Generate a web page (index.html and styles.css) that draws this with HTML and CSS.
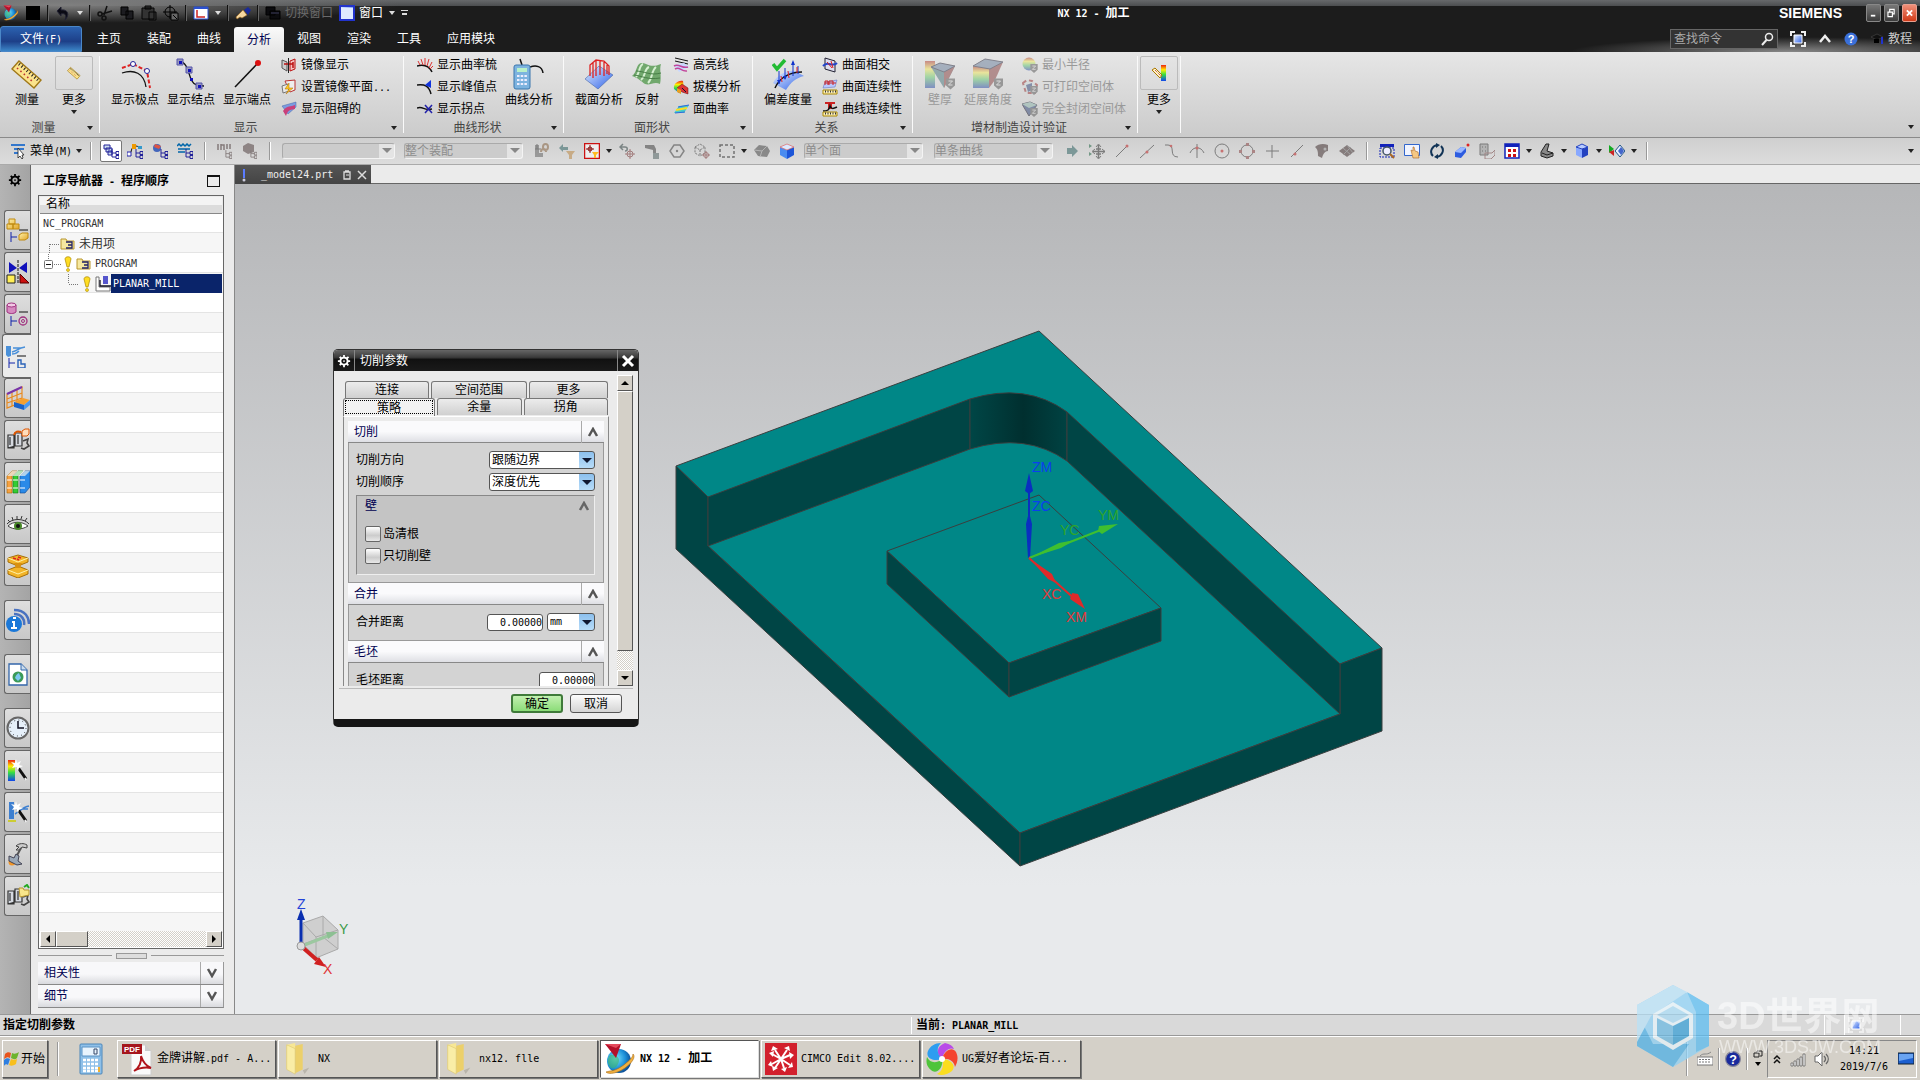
FILE: index.html
```
<!DOCTYPE html>
<html lang="zh-CN">
<head>
    <meta charset="UTF-8">
    <meta name="viewport" content="width=device-width, initial-scale=1.0">
    <title>NX 12 - 加工</title>
    <link rel="stylesheet" href="styles.css">
</head>
<body>
    <!-- Shared icons -->
    <svg class="sprite" aria-hidden="true">
        <defs>
            <linearGradient id="rainbow" x1="0" y1="0" x2="0" y2="1"><stop offset="0" stop-color="#e21"/><stop offset=".3" stop-color="#fe0"/><stop offset=".6" stop-color="#3d4"/><stop offset="1" stop-color="#14e"/></linearGradient>
            <linearGradient id="blueFace" x1="0" y1="0" x2="1" y2="1"><stop offset="0" stop-color="#e4efff"/><stop offset="1" stop-color="#2f62e8"/></linearGradient>
            <linearGradient id="goldFace" x1="0" y1="0" x2="1" y2="1"><stop offset="0" stop-color="#fff2a8"/><stop offset="1" stop-color="#e0a52a"/></linearGradient>
            <radialGradient id="globe" cx=".35" cy=".4" r=".7"><stop offset="0" stop-color="#7fe6ff"/><stop offset=".6" stop-color="#1b8fd8"/><stop offset="1" stop-color="#0a3f86"/></radialGradient>
        </defs>
        <symbol id="nx" viewBox="0 0 32 32"><circle cx="15" cy="18" r="12" fill="url(#globe)"/><path d="M11 12c4 2 5 5 3 9s-4 5-7 4c-4-4-4-9-1-13z" fill="#3db56a" opacity=".6"/><path d="M29 11c3 3-1 9-8 14S5 32 2 29l4-1c4 0 10-3 15-7s8-7 8-10z" fill="#f0b040" stroke="#a96a10" stroke-width=".6"/><path d="M1 1h16l-5 14z" fill="#b3102a"/><path d="M1 1h16l-5 4z" fill="#e44a5c"/></symbol>
        <symbol id="ruler" viewBox="0 0 32 32"><path d="M8 3l22 19-7 8L1 11z" fill="#fbe38c" stroke="#a07818" stroke-width="1.4"/><path d="M8 6l19 16" stroke="#222" stroke-width="3" stroke-dasharray="1 2.4"/><path d="M6 10l15 13" stroke="#b33" stroke-width="1.6" stroke-dasharray="1.5 3"/></symbol>
        <symbol id="gear" viewBox="0 0 16 16"><path d="M7 1h2v2l2 .8 1.500-1.300 1.400 1.400L12.400 5.400 13.200 7H15v2h-1.800l-.8 1.800 1.300 1.400-1.400 1.400-1.400-1.300L9 13v2H7v-2l-1.800-.8-1.400 1.300-1.400-1.400 1.200-1.400L2.800 9H1V7h1.800l.8-1.600-1.200-1.500 1.400-1.400L5.200 3.800 7 3zM8 5a3 3 0 100 6 3 3 0 000-6z" fill="currentColor" fill-rule="evenodd"/><circle cx="8" cy="8" r="1" fill="currentColor"/></symbol>
        <symbol id="up" viewBox="0 0 12 10"><path d="M2 9l4-7 4 7" fill="none" stroke="currentColor" stroke-width="2.500"/></symbol>
        <symbol id="down" viewBox="0 0 12 10"><path d="M2 1l4 7 4-7" fill="none" stroke="currentColor" stroke-width="2.500"/></symbol>
        <symbol id="folder" viewBox="0 0 15 13"><path d="M1 2h5l1 2h7v8H1z" fill="#f6e8a0" stroke="#b8962e"/><path d="M6 5h6v6H6M8 8h4" fill="none" stroke="#226" stroke-width="1.300"/></symbol>
        <symbol id="bang" viewBox="0 0 8 16"><path d="M1 3c0-3 6-3 6 0L5 11H3z" fill="#fd2" stroke="#a80" stroke-width=".7"/><circle cx="4" cy="14" r="1.500" fill="#fd2" stroke="#a80" stroke-width=".6"/></symbol>
        <symbol id="shield" viewBox="0 0 9 11"><path d="M0 0h9v7L4.500 11 0 7z" fill="#555"/><path d="M2.500 2.500h4l-4 4h4" stroke="#ddd" fill="none"/></symbol>
        <symbol id="tree" viewBox="0 0 8 10"><path d="M1 0v8h4M1 4h4" stroke="currentColor" fill="none"/><path d="M5 2.500h3v3H5zM5 6.500h3v3H5z" fill="none" stroke="currentColor"/></symbol>
        <symbol id="fit" viewBox="0 0 16 16"><path d="M1 5V1h4M11 1h4v4M15 11v4h-4M5 15H1v-4" fill="none" stroke="#eee" stroke-width="2"/><path d="M4 4h8v8H4z" fill="url(#blueFace)" stroke="#fff"/></symbol>
        <symbol id="machine" viewBox="0 0 24 24"><path d="M2 7h6v13H2zM9 5h7v13H9zM4 9v8M12 7v9M2 20l7-2" fill="#d5d9e0" stroke="#333" stroke-width="1.200"/><path d="M17 13l5-2-1 4 2 3-5 3-3-1" fill="none" stroke="#444" stroke-width="1.600"/></symbol>
        <symbol id="wand" viewBox="0 0 24 24"><path d="M11 8l9 13" stroke="#111" stroke-width="3"/><path d="M19 20l1 2" stroke="#eee" stroke-width="2"/><path d="M10 1l1 4 4-2-2 4 4 1-4 2-1 3-2-4-4 1 2-3-3-3 4 1z" fill="#fff"/></symbol>
        <symbol id="folderbig" viewBox="0 0 30 36"><path d="M20 30l7-3-5 7z" fill="#b9b5ab"/><path d="M3 3l9-2v31l-9-4z" fill="#f7e795"/><path d="M12 4l8-2v27l-8 4z" fill="#ecd06a"/><path d="M3 3l9 4v27l-9-5z" fill="#f9eda6" stroke="#dcc46a" stroke-width=".6"/></symbol>
    </svg>

    <header class="titlebar">
        <div class="quick">
            <svg class="i16"><use href="#nx"/></svg>
            <svg class="i16" viewBox="0 0 16 16"><path d="M1 1h14v14H1z"/></svg>
            <i class="tick"></i>
            <button aria-label="撤消"><svg class="i16" viewBox="0 0 16 16"><path d="M2 6l4-4v3c7-1 9 5 4 10 2-5 0-7-4-6v2z" fill="#0a0a14" stroke="#223"/></svg></button><i class="arrow light"></i>
            <i class="tick"></i>
            <button aria-label="剪切"><svg class="i16" viewBox="0 0 16 16"><path d="M10 1L7 10M15 6L5 9" stroke="#111" stroke-width="1.500"/><circle cx="3" cy="9" r="2" fill="none" stroke="#111" stroke-width="1.500"/><circle cx="7" cy="13" r="2" fill="none" stroke="#111" stroke-width="1.500"/></svg></button>
            <button aria-label="复制"><svg class="i16" viewBox="0 0 16 16"><path d="M2 2h7v8H2zM7 6h7v8H7z" fill="#1c1c20" stroke="#000"/></svg></button>
            <button aria-label="粘贴"><svg class="i16" viewBox="0 0 16 16"><path d="M1 3h12v11H1zM4 1h6v3H4zM8 7h7v8H8z" fill="#333" stroke="#050505"/></svg></button>
            <button aria-label="重复"><svg class="i16" viewBox="0 0 16 16"><circle cx="7" cy="7" r="5" fill="none" stroke="#000"/><path d="M7 0v14M0 7h14" stroke="#000"/><path d="M8 8h7v7H8z" fill="#666" stroke="#000"/><path d="M10 10l4 4" stroke="#000"/></svg></button>
            <i class="tick"></i>
            <button aria-label="坐标系"><svg class="i16" viewBox="0 0 16 16"><path d="M1 2h14v12H1z" fill="#fff" stroke="#2b50d0"/><path d="M1 2h14v2H1z" fill="#2b50d0"/><path d="M4 5v7h8" fill="none" stroke="#c22" stroke-width="1.500"/></svg></button><i class="arrow light"></i>
            <i class="tick"></i>
            <button aria-label="触控"><svg class="i16" viewBox="0 0 16 16"><path d="M9 5l4-3 3 3-3 5z" fill="#1a2a9a"/><path d="M1 12l7-7 4 5-5 3-2-1-3 2z" fill="#f6d7a0" stroke="#a06a20" stroke-width=".6"/></svg></button>
            <i class="tick"></i>
            <button class="dim"><svg class="i16" viewBox="0 0 16 16"><path d="M1 2h9v8H1zM5 6h10v8H5z" fill="#0b0b0e" stroke="#000"/><path d="M6 7h8v2H6z" fill="#223"/></svg>切换窗口</button>
            <button><svg class="i16" viewBox="0 0 16 16"><path d="M1 1h14v14H1z" fill="url(#blueFace)" stroke="#2233cc" stroke-width="2"/><path d="M2 3h12v11H2z" fill="#dfeaff"/></svg>窗口</button><i class="arrow light"></i><i class="arrow light bar"></i>
        </div>
        <h1><span class="lat">NX 12 - </span>加工</h1>
        <div class="brand">SIEMENS</div>
        <div class="winbtns">
            <button aria-label="最小化"><svg viewBox="0 0 14 18"><path d="M4 12h5" stroke="#fff" stroke-width="2"/></svg></button>
            <button aria-label="还原"><svg viewBox="0 0 14 18"><path d="M5 8V5h5v5H8M3 8h5v5H3z" fill="none" stroke="#fff" stroke-width="1.300"/></svg></button>
            <button class="close" aria-label="关闭"><svg viewBox="0 0 14 18"><path d="M4 6l6 6M10 6l-6 6" stroke="#fff" stroke-width="2"/></svg></button>
        </div>
    </header>

    <nav class="tabs">
        <button class="file">文件<span class="lat">(F)</span></button>
        <button>主页</button><button>装配</button><button>曲线</button><button class="active">分析</button><button>视图</button><button>渲染</button><button>工具</button><button>应用模块</button>
        <div class="tools">
            <div class="search">
                <input type="text" placeholder="查找命令" aria-label="查找命令">
                <svg viewBox="0 0 14 14"><circle cx="9" cy="5" r="3.500" fill="none" stroke="#eee" stroke-width="1.500"/><path d="M6.500 8L2 13" stroke="#eee" stroke-width="2"/></svg>
            </div>
            <button aria-label="全屏"><svg class="i16"><use href="#fit"/></svg></button>
            <button aria-label="最小化功能区"><svg class="i14" viewBox="0 0 14 14"><path d="M2 10l5-6 5 6" fill="none" stroke="#eee" stroke-width="2.500"/></svg></button>
            <button aria-label="帮助"><svg class="i14" viewBox="0 0 14 14"><circle cx="7" cy="7" r="6.500" fill="#3a6fd8"/><text x="7" y="11" text-anchor="middle" class="qmark">?</text></svg></button>
            <button class="course"><svg class="i14" viewBox="0 0 14 14"><path d="M1 5l6-3 6 3-6 3z" fill="#111" stroke="#555" stroke-width=".5"/><path d="M4 7v4h5V7" fill="#000"/><path d="M12 5v7" stroke="#23c" stroke-width="2"/></svg>教程</button>
        </div>
    </nav>

    <section class="ribbon">
        <div class="group g-measure">
            <div class="group-body">
                <button class="big"><svg class="i32"><use href="#ruler"/></svg>测量</button>
                <button class="big more"><span class="frame"><svg class="i14"><use href="#ruler"/></svg></span>更多<i class="arrow"></i></button>
            </div>
            <div class="group-name"><span>测量</span><i class="arrow"></i></div>
        </div>
        <div class="group g-show">
            <div class="group-body">
                <button class="big"><svg class="i32" viewBox="0 0 32 32"><path d="M3 10L14 6 28 13 31 30" fill="none" stroke="#d22" stroke-width="2" stroke-dasharray="4 2"/><path d="M3 15c12-4 22 0 24 14" fill="none" stroke="#111" stroke-width="1.300"/><circle cx="14" cy="6" r="2.500" fill="#fff" stroke="#229"/><circle cx="28" cy="13" r="2.500" fill="#fff" stroke="#229"/></svg>显示极点</button>
                <button class="big"><svg class="i32" viewBox="0 0 32 32"><path d="M4 3c10 2 9 14 13 20 2 4 6 5 12 5" fill="none" stroke="#111" stroke-width="1.300"/><path d="M2 1h6v6H2zM11 9h6v6h-6zM21 25h6v6h-6z" fill="#99b" stroke="#55a"/><path d="M4 3h3v3H4zM13 11h3v3h-3zM15 20h3v3h-3zM23 27h3v3h-3z" fill="#11b"/></svg>显示结点</button>
                <button class="big"><svg class="i32" viewBox="0 0 32 32"><path d="M4 29L27 5" stroke="#111" stroke-width="1.500"/><circle cx="27" cy="5" r="3" fill="#d11"/></svg>显示端点</button>
                <div class="stack">
                    <button><svg class="i16" viewBox="0 0 16 16"><path d="M1 3l5 2v9l-5-3z" fill="#ccc" stroke="#555"/><path d="M9 4l5-2v10l-5 2z" fill="#f4c0c0" stroke="#b11"/><path d="M3 7h9M12 5v6" stroke="#b11" stroke-width="1.500"/><path d="M7.500 1v15" stroke="#222"/></svg>镜像显示</button>
                    <button><svg class="i16" viewBox="0 0 16 16"><path d="M4 2l10-1v10l-5 2z" fill="#eee" stroke="#b33"/><path d="M1 7l6-2 1 7-6 2z" fill="#e9e9e9" stroke="#777"/><path d="M8 4l-4 6h4l-3 5 7-6H8z" fill="#fc2" stroke="#a60" stroke-width=".5"/></svg><span>设置镜像平面<span class="lat">...</span></span></button>
                    <button><svg class="i16" viewBox="0 0 16 16"><path d="M1 5l14-4v5L7 13z" fill="#7c9be0" stroke="#46a" stroke-width=".5"/><path d="M2 10c4-6 8-4 12-6v4c-4 1-7 0-9 7z" fill="#c9407a"/></svg>显示阻碍的</button>
                </div>
            </div>
            <div class="group-name"><span>显示</span><i class="arrow"></i></div>
        </div>
        <div class="group g-curve">
            <div class="group-body">
                <div class="stack">
                    <button><svg class="i16" viewBox="0 0 16 16"><path d="M0 9c7-2 12 0 15 6" fill="none" stroke="#111" stroke-width="1.500"/><path d="M3 8L1 4M6 8L4 2M8 8L8 1M10 9l2-7M12 11l3-6M13 12l3-3" stroke="#d33"/></svg>显示曲率梳</button>
                    <button><svg class="i16" viewBox="0 0 16 16"><path d="M0 6c8-1 12 1 14 9" fill="none" stroke="#111" stroke-width="1.500"/><path d="M14 1v8L8 6z" fill="#13d"/></svg>显示峰值点</button>
                    <button><svg class="i16" viewBox="0 0 16 16"><path d="M0 7c7-2 6 3 15 1" fill="none" stroke="#111" stroke-width="1.500"/><path d="M8 4l7 8M15 4l-7 8" stroke="#22a" stroke-width="1.500"/></svg>显示拐点</button>
                </div>
                <button class="big"><svg class="i32" viewBox="0 0 32 32"><path d="M7 1l2 6M17 9c6-2 12-1 13 6" fill="none" stroke="#111" stroke-width="1.500"/><rect x="1" y="7" width="16" height="24" rx="2" fill="#7db3df" stroke="#3a77ad"/><path d="M4 10h10v4H4z" fill="#b8f0c8"/><path d="M4 18h10M4 22h10M4 26h10" stroke="#eef" stroke-width="2" stroke-dasharray="2.500 1.200"/></svg>曲线分析</button>
            </div>
            <div class="group-name"><span>曲线形状</span><i class="arrow"></i></div>
        </div>
        <div class="group g-face">
            <div class="group-body">
                <button class="big"><svg class="i32" viewBox="0 0 32 32"><path d="M2 21L16 8l14 9-15 14z" fill="url(#blueFace)" stroke="#46a" stroke-width=".6"/><path d="M7 18V7l6-5 8 1 5 5v9M10 20V5M13 18V3M17 17V3M21 18V4M24 16V7" fill="none" stroke="#d22" stroke-width="1.300"/></svg>截面分析</button>
                <button class="big"><svg class="i32" viewBox="0 0 32 32"><path d="M1 18C6 15 5 6 10 5c6-1 8 6 20 1-2 6 1 12-1 20-6-3-10 2-15 0-4-3-7-6-13-8z" fill="#71a86d"/><path d="M5 19C9 15 8 7 12 6M10 22c5-4 3-11 8-13M17 25c5-5 3-12 8-16" stroke="#d7f0d2" fill="none" stroke-width="2"/><path d="M5 13c8 0 14 5 25 2M3 17c8 1 14 5 26 3" stroke="#477e46" fill="none"/></svg>反射</button>
                <div class="stack">
                    <button><svg class="i16" viewBox="0 0 16 16"><path d="M2 1l13 3M2 4l13 3" stroke="#111"/><path d="M1 8l10-2 5 4-10 5z" fill="#c9d8ff"/><path d="M1 9c5-3 8 3 14 1M2 12c5-3 6 3 12 2" stroke="#c2469a" fill="none" stroke-width="1.500"/></svg>高亮线</button>
                    <button><svg class="i16" viewBox="0 0 16 16"><path d="M1 10C0 5 5 1 10 2l1 8-5 4z" fill="url(#rainbow)"/><path d="M4 9l5-4 6 4v6l-6-2z" fill="#d33" stroke="#611" stroke-width=".5"/><path d="M4 9l4 2v4l-4-2z" fill="#e9a020"/><path d="M9 9l4 4" stroke="#113"/></svg>拔模分析</button>
                    <button><svg class="i16" viewBox="0 0 16 16"><path d="M1 12L6 5l10-1-5 8z" fill="#4cc"/><path d="M3 9l11-2" stroke="#fd2" stroke-width="2"/><path d="M5 6l11-2M2 12l10-1" stroke="#36d"/></svg>面曲率</button>
                </div>
            </div>
            <div class="group-name"><span>面形状</span><i class="arrow"></i></div>
        </div>
        <div class="group g-rel">
            <div class="group-body">
                <button class="big"><svg class="i32" viewBox="0 0 32 32"><path d="M1 25c5-9 14-13 22-12l9 5c-8 2-13 6-18 14z" fill="url(#blueFace)"/><path d="M3 30c4-9 13-16 27-16" stroke="#111" stroke-width="1.500" fill="none"/><path d="M7 13v13M13 10v11M21 18V4M26 16V8" stroke="#13c"/><path d="M5 22h4l-2 4zM11 18h4l-2 4zM19 7h4l-2-5z" fill="#13c"/><path d="M9 18l1 6M16 13l1 7M25 9v6" stroke="#d22"/><path d="M1 6l4 5 8-9" fill="none" stroke="#2b3" stroke-width="3.500"/></svg>偏差度量</button>
                <div class="stack">
                    <button><svg class="i16" viewBox="0 0 16 16"><path d="M3 1l10 3v11L3 12z" fill="#dde" stroke="#223"/><path d="M1 9c5-6 9 2 14-3" stroke="#24c" stroke-width="2" fill="none"/><path d="M5 5l5 6M9 4l2 7" stroke="#d22"/></svg>曲面相交</button>
                    <button><svg class="i16" viewBox="0 0 16 16"><path d="M3 3l12-2-2 7-12 1z" fill="#b9c9ff" stroke="#56b" stroke-width=".5"/><path d="M3 6V2h3v4M7 6V2h4v4M3 4h11" stroke="#c22" fill="none"/><path d="M1 11h14v4H1z" fill="#fdf0b8" stroke="#a80"/><path d="M3 12.500h11" stroke="#333" stroke-width="2" stroke-dasharray="1 1.500"/></svg>曲面连续性</button>
                    <button><svg class="i16" viewBox="0 0 16 16"><path d="M3 1h10v2h-3v5H6V3H3z" fill="#c22"/><path d="M1 10c5 0 6-1 7-5 1 3 3 3 7 1" stroke="#111" fill="none" stroke-width="1.500"/><path d="M1 11h14v4H1z" fill="#fdf0b8" stroke="#a80"/><path d="M3 12.500h11" stroke="#333" stroke-width="2" stroke-dasharray="1 1.500"/></svg>曲线连续性</button>
                </div>
            </div>
            <div class="group-name"><span>关系</span><i class="arrow"></i></div>
        </div>
        <div class="group g-print">
            <div class="group-body">
                <button class="big" disabled><svg class="i32" viewBox="0 0 32 32"><path d="M1 3h10v27H1z" fill="url(#rainbow)"/><path d="M7 9l9-4 15 3-11 22z" fill="#2d7a84"/><path d="M20 14l11-6-11 22z" fill="#a33"/><path d="M7 9l9-4 15 3-11 6z" fill="#5d7fb0" stroke="#224"/><use href="#shield" x="22" y="20" width="9" height="12"/></svg>壁厚</button>
                <button class="big" disabled><svg class="i32" viewBox="0 0 32 32"><path d="M1 8v22h16V10z" fill="url(#rainbow)"/><path d="M17 10l14-6-8 18-6 8z" fill="#a33"/><path d="M1 8l12-7 18 3-13 7z" fill="#5d7fb0" stroke="#224"/><use href="#shield" x="22" y="20" width="9" height="12"/></svg>延展角度</button>
                <div class="stack">
                    <button disabled><svg class="i16" viewBox="0 0 16 16"><circle cx="7" cy="7" r="6.500" fill="url(#rainbow)"/><use href="#shield" x="8" y="7" width="8" height="9"/></svg>最小半径</button>
                    <button disabled><svg class="i16" viewBox="0 0 16 16"><path d="M1 4l4-3 5 1 5 4-2 8H4z" fill="#cdd" stroke="#c22" stroke-width="2" stroke-dasharray="4 3"/><path d="M4 6l6-2v7l-4 2z" fill="#249"/><use href="#shield" x="8" y="7" width="8" height="9"/></svg>可打印空间体</button>
                    <button disabled><svg class="i16" viewBox="0 0 16 16"><path d="M0 3l8-2 7 3-8 11z" fill="#249" stroke="#113"/><path d="M0 3l8-2 7 3-8 3z" fill="#7ba"/><use href="#shield" x="8" y="7" width="8" height="9"/></svg>完全封闭空间体</button>
                </div>
            </div>
            <div class="group-name"><span>增材制造设计验证</span><i class="arrow"></i></div>
        </div>
        <div class="group g-more">
            <div class="group-body">
                <button class="big more"><span class="frame"><svg class="i16" viewBox="0 0 16 16"><path d="M10 0h5v16h-5z" fill="url(#rainbow)"/><path d="M4 3l7 7-2 3-8-8z" fill="#fff3c8" stroke="#a70"/><path d="M4 5l6 6" stroke="#a22" stroke-dasharray="1 1"/></svg></span>更多<i class="arrow"></i></button>
            </div>
        </div>
        <i class="arrow corner"></i>
    </section>

    <section class="selbar">
        <button class="menu"><svg class="i16" viewBox="0 0 16 16"><path d="M1 2h14M4 6h10M4 10h8" stroke="#37c" stroke-width="2"/><path d="M8 5v10l2-2 2 3 1-1-1-3h2z" fill="#fff" stroke="#222" stroke-width=".8"/></svg><span>菜单<span class="lat">(M)</span></span><i class="arrow"></i></button>
        <i class="tick near"></i>
        <button class="pressed"><svg class="i16" viewBox="0 0 16 16"><path d="M1 2h6v4H1zM3 5h6v4H3zM5 8h4v4H5z" fill="#cde" stroke="#229"/><use href="#tree" x="8" y="6" width="8" height="10" color="#229"/></svg></button>
        <button><svg class="i16" viewBox="0 0 16 16"><path d="M4 9c1-6 4-7 8-5" fill="none" stroke="#111"/><path d="M5 1h4v5H5z" fill="#e90"/><path d="M0 9h4v4H0z" fill="#fff" stroke="#22a"/><path d="M11 3h4v3h-4z" fill="#39c"/><use href="#tree" x="8" y="6" width="8" height="10" color="#229"/></svg></button>
        <button><svg class="i16" viewBox="0 0 16 16"><circle cx="5" cy="5" r="4" fill="#46b"/><path d="M3 1l6 2-2 3-5-2z" fill="#d54"/><use href="#tree" x="8" y="6" width="8" height="10" color="#229"/></svg></button>
        <button><svg class="i16" viewBox="0 0 16 16"><path d="M0 3l2-2 2 2 2-2 2 2 2-2 2 2 2-2M1 6h12M1 9h7" fill="none" stroke="#06a" stroke-width="1.500"/><use href="#tree" x="8" y="6" width="8" height="10" color="#229"/></svg></button>
        <i class="tick"></i>
        <button disabled><svg class="i16" viewBox="0 0 16 16"><path d="M1 1v6M4 1v6M4 2h3v5M10 1v5M13 1v5" stroke="#433" stroke-width="1.500" fill="none"/><use href="#tree" x="8" y="7" width="7" height="9" color="#433"/></svg></button>
        <button disabled><svg class="i16" viewBox="0 0 16 16"><path d="M1 3l5-3 6 2v7l-6 2-5-3z" fill="#544"/><use href="#tree" x="8" y="7" width="7" height="9" color="#433"/></svg></button>
        <i class="tick"></i>
        <span class="combo off w113"><select disabled aria-label="类型过滤器"><option></option></select></span>
        <span class="combo off w119"><select disabled aria-label="选择范围"><option>整个装配</option></select></span>
        <button disabled><svg class="i16" viewBox="0 0 16 16"><path d="M1 2v12h8v-4H5V2z" fill="#666"/><path d="M1 6h6M3 1v5" stroke="#333" fill="none"/><path d="M9 4c0-4 5-4 5 0s-5 4-5 0zM7 9c0-4 5-4 5 0" fill="none" stroke="#864" stroke-width="2"/></svg></button>
        <button disabled><svg class="i16" viewBox="0 0 16 16"><path d="M0 5l4-4v3h5v3H4v2z" fill="#366"/><path d="M7 8h9l-3 4v4h-3v-4z" fill="#b84"/></svg></button>
        <button><svg class="i16" viewBox="0 0 16 16"><path d="M.5.500h15v15H.5z" fill="#eee" stroke="#c11" stroke-width="1.500"/><path d="M6 2v8M2 6h8" stroke="#811"/><circle cx="6" cy="6" r="2" fill="none" stroke="#811"/><path d="M8 9h7l-3 3v3h-2v-3z" fill="#fb2"/></svg></button><i class="arrow"></i>
        <button disabled><svg class="i16" viewBox="0 0 16 16"><path d="M1 4h5c3 0 3 4 0 4M4 1L1 4l3 3" stroke="#344" stroke-width="1.500" fill="none"/><circle cx="11" cy="11" r="3" fill="none" stroke="#733"/><path d="M11 6v10M6 11h10" stroke="#733"/></svg></button>
        <button disabled><svg class="i16" viewBox="0 0 16 16"><path d="M1 2h9l2 4v4H9V7L1 5z" fill="#444"/><path d="M9 10h6v6H9z" fill="#566"/></svg></button>
        <button disabled><svg class="i16" viewBox="0 0 16 16"><path d="M5 2h6l4 6-4 6H5L1 8z" fill="none" stroke="#444" stroke-width="1.500"/><circle cx="8" cy="8" r="1.200" fill="#444"/></svg></button>
        <button disabled><svg class="i16" viewBox="0 0 16 16"><path d="M1 4l5-3 5 3v6l-5 3-5-3zM1 4l5 3 5-3M6 7v6" fill="none" stroke="#333" stroke-dasharray="2 1"/><circle cx="12" cy="12" r="2.500" fill="none" stroke="#733"/><path d="M12 8v8M8 12h8" stroke="#733"/></svg></button>
        <button disabled><svg class="i16" viewBox="0 0 16 16"><path d="M1 2h14v12H1z" fill="none" stroke="#222" stroke-width="1.500" stroke-dasharray="3 2"/></svg></button><i class="arrow"></i>
        <button disabled><svg class="i16" viewBox="0 0 16 16"><path d="M0 7l5-5 8 1 3 5-3 6-9-1z" fill="#4a4a4a"/><path d="M0 7l8 1 5-5M8 8l-2 6" stroke="#999" fill="none"/></svg></button>
        <button><svg class="i16" viewBox="0 0 16 16"><path d="M1 4l7 3v9l-7-4z" fill="#4a8cf0"/><path d="M8 7l7-3v8l-7 4z" fill="#1c55d8"/><path d="M1 4l7-3 7 3-7 3z" fill="#dce9ff" stroke="#d66" stroke-width=".7"/></svg></button>
        <span class="combo off w119"><select disabled aria-label="面规则"><option>单个面</option></select></span>
        <span class="combo off w119"><select disabled aria-label="曲线规则"><option>单条曲线</option></select></span>
        <button disabled><svg class="i16" viewBox="0 0 16 16"><path d="M3 5h5V2l6 6-6 6v-3H3z" fill="#366"/></svg></button>
        <button disabled><svg class="i16" viewBox="0 0 16 16"><path d="M0 1l3 2-3 2zM0 9l3 2-3 2z" fill="#264"/><path d="M9.500 2v13M4 8.500h12M7 6h5M7 11h5" stroke="#333" stroke-width="1.500"/><path d="M7 4l2.500-3L12 4M7 13l2.500 3 2.500-3M6 6L3 8.500 6 11M13 6l3 2.500-3 2.500" fill="none" stroke="#333"/></svg></button>
        <button disabled><svg class="i16" viewBox="0 0 16 16"><path d="M2 14L13 3" stroke="#333"/><circle cx="13" cy="3" r="1.500" fill="#b22"/></svg></button>
        <button disabled><svg class="i16" viewBox="0 0 16 16"><path d="M1 15L15 2" stroke="#333"/><circle cx="8" cy="9" r="1.500" fill="#b22"/></svg></button>
        <button disabled><svg class="i16" viewBox="0 0 16 16"><path d="M1 2h3c8 0 0 12 10 12" fill="none" stroke="#333"/><circle cx="7" cy="3" r="1.300" fill="#b22"/></svg></button>
        <button disabled><svg class="i16" viewBox="0 0 16 16"><path d="M8 1v14M1 10c3-7 11-7 14 0" fill="none" stroke="#333"/><circle cx="8" cy="5" r="1.500" fill="#b22"/></svg></button>
        <button disabled><svg class="i16" viewBox="0 0 16 16"><circle cx="8" cy="8" r="7" fill="none" stroke="#333"/><circle cx="8" cy="8" r="1.500" fill="#b22"/></svg></button>
        <button disabled><svg class="i16" viewBox="0 0 16 16"><circle cx="8" cy="8" r="6" fill="none" stroke="#333"/><path d="M7 0h3v3H7zM7 13h3v3H7zM0 7h3v3H0zM13 7h3v3h-3z" fill="#844"/></svg></button>
        <button disabled><svg class="i16" viewBox="0 0 16 16"><path d="M8 2v13M2 8h13" stroke="#333"/></svg></button>
        <button disabled><svg class="i16" viewBox="0 0 16 16"><path d="M2 14L14 2" stroke="#333"/><circle cx="6" cy="11" r="1.500" fill="#b22"/></svg></button>
        <button disabled><svg class="i16" viewBox="0 0 16 16"><path d="M1 4c3-3 8-4 13-2v6c-3 0-5 3-6 7l-4-2c0-4 0-6-3-9z" fill="#433"/><circle cx="11" cy="6" r="1.500" fill="#999"/></svg></button>
        <button disabled><svg class="i16" viewBox="0 0 16 16"><path d="M0 8l8-6 8 6-8 6z" fill="#433"/><path d="M4 5l8 7M8 2l6 8M12 4L4 12" stroke="#777"/></svg></button>
        <i class="tick"></i>
        <button><svg class="i16" viewBox="0 0 16 16"><path d="M1 1h14v3H1z" fill="#12b"/><path d="M1 5h14v9H1z" fill="none" stroke="#12b" stroke-dasharray="2 1"/><circle cx="8" cy="8" r="4" fill="#eef" stroke="#456" stroke-width="1.500"/><path d="M11 11l4 4" stroke="#a62" stroke-width="2"/></svg></button>
        <button><svg class="i16" viewBox="0 0 16 16"><path d="M.500 1.500h15v11H.500z" fill="#f0f4ff" stroke="#36c"/><path d="M7 7l2 1V4h1l1 4 3 1 1 6H9z" fill="#f5c884" stroke="#a62" stroke-width=".6"/></svg></button>
        <button><svg class="i16" viewBox="0 0 16 16"><path d="M4 13C0 9 3 3 8 2M12 3c4 4 1 10-4 11" fill="none" stroke="#135" stroke-width="2"/><path d="M7 0l4 2-4 3zM9 11l-4 3 4 2z" fill="#135"/></svg></button>
        <button><svg class="i16" viewBox="0 0 16 16"><path d="M1 9l6-5 5 1v4l-5 6-6-1z" fill="#2d5ce0"/><path d="M1 9l6-5 5 1-5 5z" fill="#9ab8ff"/><circle cx="14" cy="2" r="1.500" fill="#d22"/></svg></button>
        <button disabled><svg class="i16" viewBox="0 0 16 16"><path d="M1 1h8v11H1z" fill="#999" stroke="#333"/><path d="M3 4h1M6 4h1M3 8h1M6 8h1" stroke="#222"/><path d="M6 10h7l3-3v5l-4 4H6z" fill="none" stroke="#744"/></svg></button>
        <button><svg class="i16" viewBox="0 0 16 16"><path d="M1 1h14v14H1z" fill="#fff" stroke="#12b" stroke-width="1.500"/><path d="M1 1h14v3H1z" fill="#12b"/><path d="M4 6h3v3H4zM9 6h3v3H9zM4 11h3v3H4zM9 11h3v3H9z" fill="#c11"/></svg></button><i class="arrow"></i>
        <button><svg class="i16" viewBox="0 0 16 16"><path d="M2 9l5-8h3L8 8l6 2v3l-6 2-6-2z" fill="#888" stroke="#222"/><path d="M3 10l5 2 6-2" fill="none" stroke="#222"/></svg></button><i class="arrow"></i>
        <button><svg class="i16" viewBox="0 0 16 16"><path d="M2 4l6 2v9l-6-3z" fill="#88a8ff"/><path d="M8 6l6-2v8l-6 3z" fill="#2342c0"/><path d="M2 4l6-3 6 3-6 2z" fill="#b9ccff" stroke="#2342c0"/></svg></button><i class="arrow"></i>
        <button><svg class="i16" viewBox="0 0 16 16"><path d="M0 2l5 4-5 4z" fill="#1a2"/><path d="M0 9l5-2v6z" fill="#c22"/><path d="M6 8l5-6 5 6-5 6z" fill="#e8eeff" stroke="#258"/><path d="M9 8l3-4 3 4-3 4z" fill="#46c"/></svg></button><i class="arrow"></i>
        <i class="tick"></i>
        <i class="arrow corner"></i>
    </section>

    <main class="workspace">
        <aside class="resource">
            <svg class="i14 cog"><use href="#gear"/></svg>
            <div class="rtabs">
                <button><svg viewBox="0 0 24 24"><path d="M3 1h6v5H3zM1 6h6v5H1zM7 6h6v5H7z" fill="url(#goldFace)" stroke="#c08a10"/><path d="M13 12h9" stroke="#111"/><path d="M5 14v10M5 19h6" stroke="#12a"/><path d="M13 17l3-2h6v5l-3 2h-6z" fill="url(#goldFace)" stroke="#c08a10"/></svg></button>
                <button><svg viewBox="0 0 24 24"><path d="M3 2l8 6-8 5zM21 2l-8 6 8 5z" fill="#11b"/><path d="M12 0v24" stroke="#111" stroke-dasharray="3 1"/><path d="M1 15h8v8H1z" fill="#fe5" stroke="#222"/><path d="M14 14l9 9h-9z" fill="#c11" stroke="#500"/></svg></button>
                <button><svg viewBox="0 0 24 24"><path d="M1 3v7c2 2 7 2 9 0V3" fill="#d58ac0" stroke="#a0307f"/><ellipse cx="5.500" cy="3" rx="4.500" ry="2" fill="#f0c8e4" stroke="#a0307f"/><path d="M13 10h9" stroke="#111"/><path d="M5 14v10M5 19h6" stroke="#12a"/><circle cx="17" cy="19" r="4" fill="none" stroke="#a0307f" stroke-width="1.300"/><circle cx="17" cy="19" r="1.500" fill="none" stroke="#a0307f"/></svg></button>
                <button class="on"><svg viewBox="0 0 24 24"><path d="M2 2h5v10l-3 1-2-2z" fill="#4a90d9"/><path d="M8 8c5-1 6-4 13-5M9 4h10M8 10c4 0 5-1 7-3" stroke="#4a90d9" stroke-width="1.500" fill="none"/><path d="M13 12h9" stroke="#111"/><path d="M5 14v10M5 19h6" stroke="#12a"/><path d="M14 16h3v4h4v4h-7z" fill="none" stroke="#2a62b8" stroke-width="1.400"/></svg></button>
                <button><svg viewBox="0 0 24 24"><path d="M1 8l15-7v15L1 22zM1 13l15-6M1 17l15-5M6 6v14M11 4v14" fill="none" stroke="#e88a20" stroke-width="1.200"/><path d="M1 8l15-7" stroke="#73a" stroke-width="2"/><path d="M8 16l9-4 7 2-6 5z" fill="#f5a030"/><path d="M8 16l10 3v5L8 21z" fill="#1b63c9"/><path d="M18 19l6-5v5l-6 5z" fill="#4b98ef"/></svg></button>
                <button><svg viewBox="0 0 24 24"><use href="#machine"/><path d="M16 3l3-2h4v5l-2 2h-5z" fill="#fdb" stroke="#d50"/><path d="M8 7c1-4 4-4 7-3" stroke="#d50" stroke-width="2" fill="none"/></svg></button>
                <button><svg viewBox="0 0 24 24"><path d="M1 6l5-5h5L6 6v17H1z" fill="#f5a040" stroke="#a60" stroke-width=".6"/><path d="M7 6l5-5h5l-5 5v17H7z" fill="#3c3" stroke="#171" stroke-width=".6"/><path d="M14 6l5-5h5v16l-5 6h-5z" fill="#2a8ae8" stroke="#148" stroke-width=".6"/><path d="M1 6l5-5h18l-5 5z" fill="#e8f0f0" opacity=".7"/><path d="M1 10h5M7 10h5M14 10h5M1 18h5M7 18h5M14 18h5" stroke="#fff"/></svg></button>
                <button><svg viewBox="0 0 24 24"><path d="M2 14c5-5 14-5 20 0-6 4-15 4-20 0z" fill="#fff" stroke="#444"/><circle cx="12" cy="14" r="4" fill="#4a8a2a"/><circle cx="12" cy="14" r="2" fill="#111"/><path d="M1 12c5-6 17-6 22 0M4 10L2 8M7 8L6 5M11 7V4M15 7l1-3M19 9l2-3" stroke="#333" fill="none"/></svg></button>
                <button><svg viewBox="0 0 24 24"><path d="M2 4l10-3 10 3v4l-10 4L2 8zM2 16l10-4 10 4v4l-10 4-10-4z" fill="#f2b428" stroke="#a66e08"/><path d="M2 4l10 4 10-4M2 16l10 4 10-4" fill="none" stroke="#fff2a8"/><path d="M8 9h8l-2 5h-4z" fill="#d89010"/><path d="M7 4l3 1M12 3l3 1M11 5l2 1" stroke="#d22" stroke-width="1.500"/></svg></button>
                <button class="gap"><svg viewBox="0 0 24 24"><path d="M8 6c8 0 11 6 10 11M8 2c12 0 15 8 15 14" stroke="#4a72c0" stroke-width="2.500" fill="none"/><circle cx="8" cy="16" r="8" fill="#1b78d8"/><path d="M6 13h3v6h2v2H5v-2h2v-4H6zM7 9h3v2H7z" fill="#fff"/></svg></button>
                <button class="gap"><svg viewBox="0 0 24 24"><path d="M3 2h12l6 6v15H3z" fill="#fff" stroke="#36a" stroke-width="1.300"/><path d="M15 2v6h6" fill="#cde" stroke="#36a"/><circle cx="12" cy="15" r="5.500" fill="#3b9a58"/><path d="M9 16c1-3 2-4 4-5l2 5-3 3z" fill="#7cc8f0"/></svg></button>
                <button class="gap"><svg viewBox="0 0 24 24"><circle cx="12" cy="12" r="10.500" fill="#e6f0fa" stroke="#666" stroke-width="2"/><path d="M12 5v7h6" stroke="#112" stroke-width="1.500" fill="none"/><circle cx="12" cy="12" r="8" fill="none" stroke="#333" stroke-dasharray="1 3.200"/></svg></button>
                <button><svg viewBox="0 0 24 24"><path d="M2 2h7v21H2z" fill="url(#rainbow)"/><use href="#wand"/></svg></button>
                <button><svg viewBox="0 0 24 24"><path d="M3 2h5v17H3z" fill="#3d7fd0"/><path d="M9 14c5-3 8-7 14-8M10 9h12" stroke="#3d7fd0" stroke-width="1.500" fill="none"/><path d="M2 21h8" stroke="#cc3" stroke-width="2"/><use href="#wand"/></svg></button>
                <button><svg viewBox="0 0 24 24"><path d="M10 4c3-3 8-3 11-1v3l-5-1-2 3h-4l3-3z" stroke="#444" fill="#ccc"/><path d="M15 6L9 17" stroke="#555" stroke-width="2"/><circle cx="6" cy="20" r="3.500" fill="#f0962a"/><path d="M3 14l5 2 2-4 3 2-1 5 4 3-5 1-8-4z" fill="#9aa8b8" stroke="#445"/></svg></button>
                <button><svg viewBox="0 0 24 24"><use href="#machine"/><path d="M13 4h4l1 2h5v5l-9 2z" fill="#f8e58a" stroke="#b8962e"/><path d="M18 3l3-2 2 3" stroke="#2a2" stroke-width="2" fill="none"/></svg></button>
            </div>
        </aside>

        <aside class="navigator">
            <div class="nav-title"><h2>工序导航器<span class="lat"> - </span>程序顺序</h2><i class="maxbox"></i></div>
            <div class="tree">
                <table>
                    <thead><tr><th>名称</th></tr></thead>
                    <tbody>
                        <tr><td><div class="node first"><span class="lat">NC_PROGRAM</span></div></td></tr>
                        <tr><td><div class="node"><svg width="20" height="20" viewBox="0 0 20 20"><path d="M9.500 10v10M10 10.500h9" stroke="#777" stroke-dasharray="1 1" fill="none"/></svg><svg class="folder"><use href="#folder"/></svg><span>未用项</span></div></td></tr>
                        <tr><td><div class="node"><svg width="24" height="20" viewBox="0 0 24 20"><path d="M8.500 0v5M14 10.500h7" stroke="#777" stroke-dasharray="1 1"/><rect x="4.500" y="6.500" width="8" height="8" rx="1" fill="#fff" stroke="#777"/><path d="M6 10.500h5" stroke="#111"/></svg><svg class="bang"><use href="#bang"/></svg><svg class="folder"><use href="#folder"/></svg><span class="lat">PROGRAM</span></div></td></tr>
                        <tr><td><div class="node"><svg width="43" height="20" viewBox="0 0 43 20"><path d="M28.500 0v10M29 10.500h9" stroke="#777" stroke-dasharray="1 1"/></svg><svg class="bang"><use href="#bang"/></svg><svg class="i16" viewBox="0 0 16 16"><path d="M1 1h3v10h11v4H1z" fill="#fff" stroke="#777"/><path d="M5 4v6h11" stroke="#112" stroke-width="1.300" fill="none"/><path d="M8 0h5v8H8z" fill="#55c"/></svg><span class="lat selected">PLANAR_MILL</span></div></td></tr>
                    </tbody>
                </table>
                <div class="hscroll"><button aria-label="左"><i class="tri left"></i></button><i class="thumb"></i><button class="end" aria-label="右"><i class="tri right"></i></button></div>
            </div>
            <div class="splitter"><i></i></div>
            <button class="fold"><span>相关性</span><svg><use href="#down"/></svg></button>
            <button class="fold"><span>细节</span><svg><use href="#down"/></svg></button>
        </aside>

        <section class="view">
            <div class="doctabs"><button><svg class="i14" viewBox="0 0 14 14"><path d="M6 1v9" stroke="#5a7cff" stroke-width="2"/><circle cx="6" cy="12" r="1.500" fill="#ccd"/></svg><span class="lat">_model24.prt</span><svg class="i10" viewBox="0 0 10 10"><path d="M2 2h6v7H2zM3 1h4" fill="none" stroke="#ddd" stroke-width="1.300"/><path d="M4 5h3" stroke="#ddd"/></svg><svg class="i10" viewBox="0 0 10 10"><path d="M1 1l8 8M9 1L1 9" stroke="#ddd" stroke-width="1.500"/></svg></button></div>
            <!-- Part model, work axes and view triad -->
            <svg class="scene" viewBox="235 184 1685 829" preserveAspectRatio="xMinYMin meet">
                <defs>
                    <linearGradient id="fillet"><stop offset="0" stop-color="#004646"/><stop offset=".25" stop-color="#003c3c"/><stop offset=".55" stop-color="#002f2f"/><stop offset="1" stop-color="#004242"/></linearGradient>
                </defs>
                <g stroke="#3a3f3f" stroke-width="1" stroke-linejoin="round">
                    <path d="M1039 331L1382 648 1340 664V714L1020 833 708 546V497L676 466z" fill="#008787"/>
                    <path d="M676 466L708 497V546L1020 833V866L676 549z" fill="#004545"/>
                    <path d="M1020 833L1340 714V664L1382 648V731L1020 866z" fill="#004545"/>
                    <path d="M708 497L970 399V449L708 546z" fill="#004545"/>
                    <path d="M970 399Q1026 382 1067 412V461Q1026 432 970 449z" fill="url(#fillet)"/>
                    <path d="M1067 412L1340 664V714L1067 461z" fill="#004545"/>
                    <path d="M887 551L1039 495 1161 608 1009 663z" fill="#008787"/>
                    <path d="M887 551L1009 663V697L887 584z" fill="#004545"/>
                    <path d="M1009 663L1161 608V641L1009 697z" fill="#004545"/>
                </g>
                <g class="axis-z"><path d="M1029 558V485" stroke="#0a2fc0" stroke-width="2"/><path d="M1029 473l4 18-4 3-4-3zM1029 512l3 12-2 34h-2l-2-34z" fill="#0a2fc0"/><text x="1032" y="472">ZM</text><text x="1032" y="511">ZC</text></g>
                <g class="axis-y"><path d="M1029 558L1106 528" stroke="#3fbf30" stroke-width="2"/><path d="M1118 524l-16 10-4-3 1-5zM1029 558l30-15 16-3-14 8z" fill="#3fbf30"/><text x="1098" y="520">YM</text><text x="1060" y="535">YC</text></g>
                <g class="axis-x"><path d="M1029 558L1078 602" stroke="#e02a2a" stroke-width="2"/><path d="M1085 609l-15-10 2-6 6 1zM1029 558l23 16 4 9-8-4z" fill="#e02a2a"/><text x="1042" y="599">XC</text><text x="1066" y="622">XM</text></g>
                <g class="triad">
                    <path d="M303 923L323 916 338 930V949L316 958 303 944z" fill="#cfcfcf" stroke="#aaa"/>
                    <path d="M303 923L316 937 338 930M316 937V958M323 916V937L338 949M323 937L303 944" fill="none" stroke="#aaa"/>
                    <path d="M302 946L330 935" stroke="#9cc8a0" stroke-width="3"/><path d="M338 932l-10 7-2-7z" fill="#8dc093"/>
                    <path d="M301 945V920" stroke="#0a2fb0" stroke-width="3"/><path d="M301 909l4 11h-8z" fill="#0a2fb0"/>
                    <path d="M301 946L317 960" stroke="#d02020" stroke-width="4"/><path d="M326 967l-12-3 5-7z" fill="#d02020"/>
                    <circle cx="301" cy="946" r="4" fill="#ddd" stroke="#999"/>
                    <text x="297" y="909" fill="#2443d8">Z</text><text x="339" y="934" fill="#3a9a48">Y</text><text x="323" y="974" fill="#e03535">X</text>
                </g>
            </svg>

            <div class="dialog" role="dialog" aria-label="切削参数">
                <div class="dlg-title"><svg class="i14"><use href="#gear"/></svg><h2>切削参数</h2><button aria-label="关闭"><svg class="i14" viewBox="0 0 14 14"><path d="M2 2l10 10M12 2L2 12" stroke="#fff" stroke-width="3"/></svg></button></div>
                <div class="dlg-body">
                    <div class="dlg-page">
                        <div class="dlg-tabs back"><button>连接</button><button>空间范围</button><button>更多</button></div>
                        <div class="dlg-tabs"><button class="active">策略</button><button>余量</button><button>拐角</button></div>
                        <div class="pane">
                            <button class="sect"><span>切削</span><svg><use href="#up"/></svg></button>
                            <div class="sect-body cut">
                                <div class="field"><label for="dir">切削方向</label><span class="combo w106"><select id="dir"><option>跟随边界</option></select></span></div>
                                <div class="field"><label for="order">切削顺序</label><span class="combo w106"><select id="order"><option>深度优先</option></select></span></div>
                                <div class="wall">
                                    <button><span>壁</span><svg><use href="#up"/></svg></button>
                                    <label><input type="checkbox">岛清根</label>
                                    <label><input type="checkbox">只切削壁</label>
                                </div>
                            </div>
                            <button class="sect"><span>合并</span><svg><use href="#up"/></svg></button>
                            <div class="sect-body merge">
                                <div class="field"><label for="dist">合并距离</label><input id="dist" type="text" value="0.00000"><span class="combo w48"><select class="unit" aria-label="单位"><option>mm</option></select></span></div>
                            </div>
                            <button class="sect"><span>毛坯</span><svg><use href="#up"/></svg></button>
                            <div class="sect-body merge">
                                <div class="field"><label for="blank">毛坯距离</label><input id="blank" type="text" value="0.00000"></div>
                            </div>
                        </div>
                    </div>
                    <div class="vscroll"><button aria-label="上"><i class="tri up"></i></button><i class="thumb"></i><button class="end" aria-label="下"><i class="tri down"></i></button></div>
                </div>
                <div class="dlg-actions"><button class="ok">确定</button><button>取消</button></div>
            </div>
        </section>
    </main>

    <footer class="status">
        <span class="cue">指定切削参数</span>
        <span class="state">当前<span class="lat">: PLANAR_MILL</span></span>
        <span class="cell"></span><span class="cell wide"><svg class="i16"><use href="#fit"/></svg></span><span class="cell"></span>
    </footer>

    <footer class="taskbar">
        <button class="start"><svg class="i16" viewBox="0 0 16 16"><path d="M1 3c2-2 4-2 6-1L6 7C4 6 3 6 0 8z" fill="#e8541c"/><path d="M8 2c2 1 4 1 7-1l-2 6c-2 2-4 1-6 0z" fill="#6db42c"/><path d="M0 9c2-2 4-2 6-1l-2 6c-1-1-3-1-4 1z" fill="#2f7fe0"/><path d="M7 8c2 1 4 1 6 0l-1 5c-3 2-5 2-7 1z" fill="#f8bf1c"/></svg>开始</button>
        <i class="tick"></i>
        <button class="calc" aria-label="计算器"><svg viewBox="0 0 24 32"><rect x="1" y="1" width="22" height="30" rx="1" fill="#8fc0e8" stroke="#4a86ba"/><path d="M3 4h18v9H3z" fill="#e9f4fd" stroke="#5a92c4"/><path d="M15 6h3v5h-3z" fill="none" stroke="#346"/><path d="M4 17h16M4 21h16M4 25h16M4 28h16" stroke="#fff" stroke-width="2.500" stroke-dasharray="3 1"/><path d="M19 24h2v5h-2z" fill="#f0b030"/></svg></button>
        <div class="tasks">
            <button><svg viewBox="0 0 32 32"><path d="M10 2h14l6 6v24H10z" fill="#fafafa" stroke="#ccc"/><path d="M24 2v6h6" fill="#ccc"/><path d="M1 1h20v10H1z" fill="#a5151c"/><text x="11" y="9" text-anchor="middle" class="pdf">PDF</text><path d="M13 28c5-3 8-9 7-15 2 6 5 10 10 12-6-1-12 0-17 3z" fill="none" stroke="#b0131a" stroke-width="2"/></svg><span>金牌讲解<span class="lat">.pdf - A...</span></span></button>
            <button><svg><use href="#folderbig"/></svg><span class="lat">NX</span></button>
            <button><svg><use href="#folderbig"/></svg><span class="lat">nx12. flle</span></button>
            <button class="current"><svg><use href="#nx"/></svg><span><span class="lat">NX 12 - </span>加工</span></button>
            <button><svg viewBox="0 0 32 32"><path d="M0 0h32v32H0z" fill="#d2202c"/><path d="M16 16L10 7M16 16L22 7M16 16L25 12M16 16L25 22M16 16L19 25M16 16L10 25M16 16L7 21M16 16L7 11" stroke="#fff" stroke-width="2"/><path d="M6 8l2-5 5 3zM19 5l5-2 1 5zM24 9l5 3-4 4zM23 25l5-1-1-5zM16 26l4 3 2-5zM7 23l1 5 5-3zM6 18l-3 4 5 2zM4 10l5-2-1 6z" fill="#fff"/></svg><span class="lat">CIMCO Edit 8.02....</span></button>
            <button><svg viewBox="0 0 32 32"><path d="M16 16C10 12 10 3 19 0c5 1 8 3 9 6-5-2-10 2-12 10z" fill="#b94be8"/><path d="M16 16c2-8 10-13 14-7 3 6 1 11-1 15-1-6-6-9-13-8z" fill="#f4442e"/><path d="M16 16c8 0 15 6 10 12-5 4-11 5-15 3 6-3 7-9 5-15z" fill="#fbdd1f"/><path d="M16 16c2 9-6 16-11 11-5-4-5-9-4-13 3 6 9 7 15 2z" fill="#4fc43a"/><path d="M16 16C8 19-1 15 2 8c2-5 7-8 13-8-5 5-4 11 1 16z" fill="#2d9df0"/><circle cx="16" cy="16" r="3" fill="#fff"/></svg><span><span class="lat">UG</span>爱好者论坛-百<span class="lat">...</span></span></button>
        </div>
        <i class="tick"></i>
        <svg class="i16" viewBox="0 0 16 16"><path d="M0 6h16v8H0z" fill="#fff" stroke="#777"/><path d="M2 8.500h12M2 11h12" stroke="#777" stroke-dasharray="2 1"/><path d="M3 5c4-4 6 0 11-4" fill="none" stroke="#888"/></svg>
        <i class="tick thin"></i>
        <svg class="i16" viewBox="0 0 14 14"><circle cx="7" cy="7" r="6.500" fill="#1a2a9c" stroke="#889"/><text x="7" y="11" text-anchor="middle" class="qmark">?</text></svg>
        <i class="tick thin"></i>
        <svg class="i10 tall" viewBox="0 0 10 18"><path d="M4 3V1h5v5H7M1 3h5v4H1z" fill="none" stroke="#222"/><path d="M2 12h6l-3 4z"/></svg>
        <div class="tray">
            <svg class="i10" viewBox="0 0 10 10"><path d="M2 5l3-3 3 3M2 9l3-3 3 3" fill="none" stroke="#111" stroke-width="1.500"/></svg>
            <svg class="i16" viewBox="0 0 16 16"><path d="M1 12h2v3H1zM4 10h2v5H4zM7 8h2v7H7zM10 6h2v9h-2zM13 3h2v12h-2z" fill="#fff" stroke="#666" stroke-width=".8"/></svg>
            <svg class="i16" viewBox="0 0 16 16"><path d="M1 5h3l4-4v14l-4-4H1z" fill="#fff" stroke="#666"/><path d="M10 5c2 2 2 4 0 6M12 3c3 3 3 7 0 10" fill="none" stroke="#666" stroke-width="1.300"/></svg>
            <time><span>14:21</span><span>2019/7/6</span></time>
            <svg class="i16" viewBox="0 0 16 16"><path d="M0 2h16v11H0z" fill="#1c5fd0" stroke="#123"/><path d="M1 3h14v4L1 10z" fill="#6aa4f2"/></svg>
        </div>
    </footer>

    <svg class="watermark" viewBox="0 0 264 90" aria-hidden="true">
        <g opacity=".75">
            <path d="M0 23L36 3 72 23V64L36 85 0 64z" fill="#8fd0f4"/>
            <path d="M50 10L72 23V64L59 70V30z" fill="#5cbcf0"/>
            <path d="M0 64V30L16 62 52 62 36 85z" fill="#4fb0e6"/>
            <path d="M36 3L50 10 14 34 0 60V23z" fill="#b9e0f6"/>
            <path d="M16 32L36 20 56 32V56L36 68 16 56z" fill="#e6f3fa"/>
            <path d="M20 36L36 44V63L20 54z" fill="#6cb8e0"/><path d="M52 36L36 44V63L52 54z" fill="#3a9fd4"/><path d="M20 33L36 24 52 33 36 41z" fill="#a9d9f2"/>
        </g>
        <text x="80" y="47" class="wm-big">3D世界网</text>
        <text x="82" y="71" class="wm-small">WWW.3DSJW.COM</text>
    </svg>
</body>
</html>
```
FILE: styles.css
```
:root {
    --dark: #1c1c1c;
    --panel: #ebebeb;
    --classic: #d4d0c8;
    --navy: #000050;
    --line: #8a8a8a;
}

* {
    margin: 0;
    padding: 0;
    box-sizing: border-box;
}

body {
    display: flex;
    flex-direction: column;
    height: 100vh;
    overflow: hidden;
    background: #d9d9d9;
    color: #000;
    font-family: "Liberation Sans", "Noto Sans CJK SC", sans-serif;
    font-size: 12px;
    line-height: 16px;
}

button {
    background: none;
    border: none;
    color: inherit;
    font: inherit;
    white-space: nowrap;
}

input,
select {
    font: inherit;
}

h1,
h2 {
    font-size: 12px;
}

svg {
    display: block;
    flex: none;
}

.sprite {
    position: absolute;
    width: 0;
    height: 0;
}

.lat {
    font-family: "DejaVu Sans Mono", monospace;
    font-size: 10px;
    white-space: pre;
}

.i10 { width: 10px; height: 10px; }
.i14 { width: 14px; height: 14px; }
.i16 { width: 16px; height: 16px; }
.i32 { width: 32px; height: 32px; }

.arrow {
    flex: none;
    width: 0;
    height: 0;
    border: 3px solid transparent;
    border-top: 4px solid #222;
    border-bottom: 0;
}

.arrow.light {
    border-top-color: #ddd;
}

.arrow.corner {
    margin-left: auto;
    margin-right: 6px;
}

.tick {
    flex: none;
    width: 2px;
    height: 18px;
    border-left: 1px solid #999;
    border-right: 1px solid #fff;
}

/* Title bar */
.titlebar {
    display: flex;
    align-items: center;
    flex: none;
    height: 26px;
    background:
        radial-gradient(ellipse 340px 18px at 60px 5px, #808080, transparent),
        linear-gradient(#67696b, #4c4e50 6px, var(--dark) 6px);
    color: #fff;
}

.quick {
    display: flex;
    align-items: center;
    gap: 6px;
    padding-left: 3px;
}

.quick button {
    display: flex;
    align-items: center;
    gap: 4px;
}

.quick .dim {
    color: #6a6a6a;
}

.quick .tick {
    border-left-color: #111;
    border-right-color: #666;
    height: 16px;
}

.arrow.bar {
    width: 7px;
    height: 7px;
    border-left: 0;
    border-right: 0;
    border-top: 1px solid #ddd;
    background: linear-gradient(#ddd, #ddd) center 2px / 5px 2px no-repeat;
}

.titlebar h1 {
    flex: 1;
    text-align: center;
}

.brand {
    margin-right: 24px;
    font-size: 14px;
    font-weight: bold;
}

.winbtns {
    display: flex;
    gap: 3px;
    padding-right: 3px;
}

.winbtns button {
    width: 15px;
    height: 18px;
    border: 1px solid #888;
    border-radius: 2px;
    background: linear-gradient(#777, #3c3c3c);
}

.winbtns svg {
    width: 100%;
    height: 100%;
}

.winbtns .close {
    border-color: #e8a090;
    background: linear-gradient(#f0907a, #d03a18);
}

/* Ribbon tabs */
.tabs {
    display: flex;
    align-items: stretch;
    flex: none;
    height: 26px;
    background: radial-gradient(ellipse 220px 15px at calc(100% - 130px) 100%, #888, transparent), var(--dark);
    color: #fff;
}

.tabs > button {
    padding: 0 13px;
}

.tabs .file {
    width: 82px;
    margin-right: 2px;
    border: 1px solid #4a87c8;
    border-radius: 3px 3px 0 0;
    background: linear-gradient(#2b62b0, #1d3f88 60%, #3c86c8);
}

.tabs .active {
    margin-top: 1px;
    border-radius: 3px 3px 0 0;
    background: linear-gradient(#fafafa, #e6e6e6);
    color: var(--navy);
}

.tools {
    display: flex;
    align-items: center;
    gap: 12px;
    margin-left: auto;
    padding-right: 8px;
}

.tools button {
    display: flex;
    align-items: center;
    gap: 4px;
}

.tools .course {
    color: #ccc;
}

.search {
    display: flex;
    align-items: center;
    width: 108px;
    height: 20px;
    padding: 0 3px;
    border: 1px solid #666;
    background: #333;
}

.search input {
    flex: 1;
    width: 0;
    border: none;
    outline: none;
    background: none;
    color: #ddd;
}

.search input::placeholder {
    color: #aaa;
}

.search svg {
    width: 14px;
    height: 14px;
}

.qmark {
    fill: #fff;
    font: bold 11px "Liberation Sans", sans-serif;
}

/* Ribbon */
.ribbon {
    display: flex;
    flex: none;
    height: 86px;
    border-bottom: 1px solid var(--line);
    background: linear-gradient(#e6e6e6, #cbcbcb);
}

.group {
    display: flex;
    flex-direction: column;
    flex: none;
    border-right: 1px solid #fafafa;
    margin: 4px 0;
}

.g-measure { width: 100px; }
.g-show { width: 304px; }
.g-curve { width: 160px; }
.g-face { width: 189px; }
.g-rel { width: 160px; }
.g-print { width: 225px; }
.g-more { width: 43px; }

.group-body {
    display: flex;
    flex: 1;
    min-height: 0;
    padding-left: 7px;
}

.g-more .group-body {
    padding-left: 2px;
}

.big {
    display: flex;
    flex-direction: column;
    align-items: center;
    align-self: flex-start;
    gap: 2px;
    min-width: 40px;
    padding: 2px 4px 0;
}

.big.more {
    min-width: 38px;
    margin-left: 8px;
    padding: 0;
}

.g-more .big.more {
    margin-left: 0;
}

.frame {
    display: flex;
    align-items: center;
    justify-content: center;
    width: 38px;
    height: 34px;
    border: 1px solid #bbb;
    border-radius: 2px;
}

.stack {
    display: flex;
    flex-direction: column;
    margin-top: -2px;
    padding: 0 4px 0 6px;
}

.stack button {
    display: flex;
    align-items: center;
    gap: 4px;
    height: 22px;
}

.ribbon button:disabled {
    color: #999;
}

.ribbon button:disabled svg {
    opacity: 0.5;
    filter: saturate(0.6);
}

.group-name {
    display: flex;
    align-items: center;
    height: 16px;
    margin-bottom: -3px;
    padding-right: 6px;
    color: #444;
}

.group-name span {
    flex: 1;
    text-align: center;
}

.ribbon .corner {
    margin-top: 73px;
}

/* Selection bar */
.selbar {
    display: flex;
    align-items: center;
    gap: 9px;
    flex: none;
    height: 27px;
    padding-left: 10px;
    border-bottom: 1px solid #aaa;
    background: linear-gradient(#cfcfcf, #dcdcdc);
}

.selbar .tick {
    margin: 0 2px;
}

.selbar .tick.near {
    margin: 0 -1px;
}

.selbar .menu {
    display: flex;
    align-items: center;
    gap: 4px;
}

.selbar .arrow {
    margin: 0 -2px 0 -3px;
}

.selbar .menu .arrow {
    margin: 0;
}

.selbar .arrow.corner {
    margin: 0 6px 0 auto;
}

.selbar .pressed {
    margin-right: -4px;
    padding: 2px;
    border: 1px solid #777;
    border-radius: 2px;
    background: #fff;
}

.selbar button:disabled svg {
    opacity: 0.55;
}

/* Drop-downs */
.combo {
    position: relative;
    flex: none;
}

.w48 { width: 48px; }
.w106 { width: 106px; }
.w113 { width: 113px; }

.w119 {
    width: 119px;
    margin-right: 2px;
}

.combo select {
    display: block;
    width: 100%;
    height: 18px;
    padding-left: 2px;
    appearance: none;
    border: 1px solid #555;
    border-radius: 3px;
    background: linear-gradient(#8cc0ee, #b8dcf8) right / 15px 100% no-repeat #fff;
    color: #000;
    line-height: 16px;
}

.combo .unit {
    font-family: "DejaVu Sans Mono", monospace;
    font-size: 10px;
}

.combo::after {
    content: "";
    position: absolute;
    top: 7px;
    right: 3px;
    border: 5px solid transparent;
    border-top: 5px solid #101830;
    border-bottom: 0;
    pointer-events: none;
}

.combo.off select {
    height: 16px;
    padding-left: 0;
    border-color: #aaa #f4f4f4 #f4f4f4 #aaa;
    background: linear-gradient(#e4e4e4, #e4e4e4) right / 15px 100% no-repeat #ccc;
    color: #8c8c8c;
    opacity: 1;
    line-height: 14px;
}

.combo.off::after {
    top: 5px;
    border-top-color: #888;
}

/* Workspace */
.workspace {
    display: flex;
    flex: 1;
    min-height: 0;
}

.resource {
    flex: none;
    width: 31px;
    background: linear-gradient(90deg, #b4b4b4, #a4a4a4);
    border-right: 1px solid #666;
}

.cog {
    margin: 8px 0 23px 8px;
}

.rtabs {
    display: flex;
    flex-direction: column;
    gap: 2px;
    padding-left: 4px;
}

.rtabs button {
    display: flex;
    align-items: center;
    height: 40px;
    padding-left: 1px;
    border: 1px solid #666;
    border-right: none;
    border-radius: 3px 0 0 3px;
    background: linear-gradient(#dedede, #c8c8c8);
}

.rtabs svg {
    width: 24px;
    height: 24px;
}

.rtabs .on {
    height: 44px;
    margin: -2px -1px -2px -2px;
    background: var(--panel);
}

.rtabs .gap {
    margin-top: 12px;
}

.navigator {
    display: flex;
    flex-direction: column;
    flex: none;
    width: 204px;
    padding: 2px 10px 6px 7px;
    border-right: 1px solid #888;
    background: var(--panel);
}

.nav-title {
    display: flex;
    align-items: center;
    justify-content: space-between;
    height: 28px;
    padding: 0 4px 0 5px;
}

.maxbox {
    width: 13px;
    height: 12px;
    border: 1px solid #111;
    border-top-width: 2px;
}

.tree {
    display: flex;
    flex-direction: column;
    flex: 1;
    min-height: 0;
    border: 1px solid #666;
    padding: 1px;
    background: repeating-linear-gradient(#fff 0 19px, #e4e4e4 19px 20px, #f6f6f6 20px 39px, #e4e4e4 39px 40px) 0 17px no-repeat;
}

.tree table {
    width: 100%;
    border-collapse: collapse;
}

.tree th {
    height: 16px;
    padding-left: 6px;
    border-bottom: 1px solid #888;
    background: linear-gradient(#f4f4f4 50%, #dcdcdc 50%);
    font-weight: normal;
    line-height: 15px;
    text-align: left;
}

.node {
    display: flex;
    align-items: center;
    gap: 4px;
    height: 20px;
    color: #333;
}

.node.first {
    padding-left: 3px;
}

.node svg:first-child {
    margin-right: -4px;
}

.folder {
    width: 15px;
    height: 13px;
}

.bang {
    width: 8px;
    height: 16px;
}

.selected {
    flex: 1;
    height: 19px;
    margin-left: -4px;
    padding-left: 2px;
    background: #0a246a;
    color: #fff;
    line-height: 19px;
}

.hscroll,
.vscroll {
    display: flex;
    background: repeating-conic-gradient(#fff 0 25%, #d4d0c8 0 50%) 0 0 / 2px 2px;
}

.hscroll {
    height: 16px;
    margin-top: auto;
}

.hscroll button,
.vscroll button,
.thumb {
    display: flex;
    align-items: center;
    justify-content: center;
    width: 16px;
    height: 16px;
    border: 1px solid;
    border-color: #fff #555 #555 #fff;
    background: var(--classic);
}

.hscroll .thumb {
    width: 32px;
}

.hscroll .end {
    margin-left: auto;
}

.tri {
    border: 4px solid transparent;
}

.tri.left { border-right-color: #000; border-left-width: 0; }
.tri.right { border-left-color: #000; border-right-width: 0; }
.tri.up { border-bottom-color: #000; border-top-width: 0; }
.tri.down { border-top-color: #000; border-bottom-width: 0; }

.splitter {
    display: flex;
    align-items: center;
    justify-content: center;
    height: 13px;
    background: linear-gradient(#999, #999) center / 100% 1px no-repeat;
}

.splitter i {
    width: 31px;
    height: 6px;
    border: 1px solid #999;
    outline: 4px solid var(--panel);
    background: #ddd;
}

.fold {
    display: flex;
    height: 23px;
    border-bottom: 1px solid #888;
    border-right: 1px solid #999;
    background: linear-gradient(#f8f8fa 55%, #d9dade);
    color: var(--navy);
}

.fold span {
    flex: 1;
    padding-left: 6px;
    line-height: 22px;
    text-align: left;
}

.fold svg,
.sect svg {
    box-sizing: content-box;
    width: 12px;
    height: 10px;
    padding: 6px 5px;
    border-left: 1px solid #aaa;
    color: #555;
}

/* Graphics window */
.view {
    position: relative;
    display: flex;
    flex-direction: column;
    flex: 1;
    min-width: 0;
    background: linear-gradient(#b4b5b7, #e8eaec 85%);
}

.doctabs {
    flex: none;
    height: 19px;
    border-bottom: 1px solid #666;
    background: var(--panel);
}

.doctabs button {
    display: flex;
    align-items: center;
    gap: 9px;
    width: 136px;
    height: 19px;
    padding-left: 3px;
    background: linear-gradient(#555, #444);
    color: #eee;
}

.doctabs .i10 {
    margin-right: -4px;
}

.scene {
    flex: 1;
    width: 100%;
    min-height: 0;
}

.scene text {
    font: 14px "Liberation Sans", sans-serif;
}

.axis-z text { fill: #0a3ff0; }
.axis-y text { fill: #2fa52a; }
.axis-x text { fill: #e03a3a; }

/* Cutting parameters dialog */
.dialog {
    position: absolute;
    top: 184px;
    left: 98px;
    width: 306px;
    border: 1px solid #333;
    border-bottom: 8px solid #151515;
    border-radius: 5px;
    background: var(--panel);
}

.dlg-title {
    display: flex;
    align-items: center;
    height: 21px;
    padding-left: 3px;
    border-radius: 4px 4px 0 0;
    background: linear-gradient(#666, #3a3a3a 35%, #111 45%, #1a1a1a);
    color: #fff;
}

.dlg-title h2 {
    flex: 1;
    height: 21px;
    margin-left: 3px;
    padding-left: 5px;
    border-left: 1px solid #888;
    font-weight: normal;
    line-height: 22px;
}

.dlg-title button {
    height: 21px;
    padding: 0 3px;
    border-left: 1px solid #888;
}

.dlg-body {
    display: flex;
    gap: 8px;
    height: 318px;
    margin: 0 5px;
    padding: 4px 0 2px 4px;
    border-bottom: 1px solid #bbb;
}

.dlg-page {
    flex: 1;
    padding-top: 6px;
    overflow: hidden;
}

.dlg-tabs {
    display: grid;
    grid-template-columns: 92px 1fr 1fr;
    gap: 2px;
    padding-right: 1px;
}

.dlg-tabs.back {
    grid-template-columns: 84px 96px 1fr;
    padding-left: 2px;
}

.dlg-tabs button {
    height: 17px;
    border: 1px solid #777;
    border-bottom: none;
    border-radius: 3px 3px 0 0;
    background: linear-gradient(#ececec, #d0d0d0);
    line-height: 16px;
}

.dlg-tabs .active {
    height: 18px;
    background: #f2f2f2;
    outline: 1px dotted #000;
    outline-offset: -3px;
}

.pane {
    padding: 4px 4px 5px;
    border: 1px solid #888;
    border-top-color: #fff;
}

.sect {
    display: flex;
    width: 100%;
    height: 22px;
    border-bottom: 1px solid #888;
    background: linear-gradient(#fafafc 50%, #dedfe4);
    color: var(--navy);
}

.sect span {
    flex: 1;
    padding-left: 6px;
    line-height: 22px;
    text-align: left;
}

.sect-body {
    padding: 8px 8px 0 7px;
    border: 1px solid #999;
    border-top: none;
    background: #d3d3d3;
}

.sect-body.cut {
    height: 140px;
}

.sect-body.merge {
    height: 36px;
}

.field {
    display: flex;
    align-items: center;
    gap: 4px;
    height: 18px;
    margin-bottom: 4px;
}

.field label {
    flex: 1;
}

.field input {
    width: 56px;
    height: 17px;
    padding-left: 12px;
    border: 1px solid #555;
    border-radius: 3px;
    background: #fff;
    font-family: "DejaVu Sans Mono", monospace;
    font-size: 10px;
}

.wall {
    height: 80px;
    padding: 1px 4px 0 8px;
    border: 1px solid;
    border-color: #888 #eee #eee #888;
    background: #c4c4c4;
}

.wall button {
    display: flex;
    align-items: center;
    justify-content: space-between;
    width: 100%;
    height: 18px;
    margin-bottom: 8px;
    color: var(--navy);
}

.wall svg {
    width: 12px;
    height: 10px;
    color: #666;
}

.wall label {
    display: flex;
    align-items: center;
    gap: 2px;
    height: 22px;
}

.wall input {
    width: 16px;
    height: 16px;
    appearance: none;
    border: 1px solid #666;
    border-radius: 2px;
    background: linear-gradient(#fff, #ccc 60%, #e8e8e8);
}

.vscroll {
    flex-direction: column;
    width: 16px;
}

.vscroll .thumb {
    height: 260px;
}

.vscroll .end {
    margin-top: auto;
}

.dlg-actions {
    display: flex;
    justify-content: flex-end;
    gap: 7px;
    padding: 5px 16px 6px;
}

.dlg-actions button {
    width: 52px;
    height: 19px;
    border: 1px solid #555;
    border-radius: 3px;
    background: linear-gradient(#fdfdfd, #d4d4d4);
}

.dlg-actions .ok {
    border: 2px solid #3f7a3a;
    background: linear-gradient(#c2f0b0, #8bdc78);
    line-height: 14px;
}

/* Status bar */
.status {
    display: flex;
    align-items: center;
    flex: none;
    height: 22px;
    border-top: 1px solid #999;
    border-bottom: 1px solid #999;
    background: #d9d9d9;
    font-weight: bold;
}

.cue {
    flex: 1;
    padding-left: 3px;
}

.state {
    flex: 1;
    padding-left: 4px;
    border-left: 1px solid #fff;
}

.cell {
    display: flex;
    align-items: center;
    width: 20px;
    height: 20px;
    padding-left: 3px;
    border-left: 1px solid #fff;
}

.cell.wide {
    width: 56px;
}

/* Taskbar */
.taskbar {
    display: flex;
    align-items: center;
    flex: none;
    height: 44px;
    padding: 0 3px 0 2px;
    border-top: 1px solid #fff;
    background: var(--classic);
}

.taskbar > .tick {
    height: 34px;
    margin: 0 9px;
}

.taskbar > .tick.thin {
    height: 22px;
    margin: 0 5px;
}

.start,
.tasks button {
    display: flex;
    align-items: center;
    height: 38px;
    border: 1px solid;
    border-color: #fff #555 #555 #fff;
    box-shadow: 1px 1px 0 #777;
}

.start {
    gap: 1px;
    width: 46px;
    padding-left: 1px;
}

.calc {
    margin: 0 14px 0 11px;
}

.calc svg {
    width: 24px;
    height: 32px;
}

.tasks {
    display: flex;
    flex: 1;
    gap: 2px;
}

.tasks button {
    gap: 4px;
    width: 159px;
    padding: 0 3px;
}

.tasks svg {
    width: 32px;
    height: 34px;
}

.tasks .current {
    border-color: #555 #ddd #ddd #555;
    background: #fff;
    font-weight: bold;
}

.pdf {
    fill: #fff;
    font: bold 8px "Liberation Sans", sans-serif;
}

.taskbar .tall {
    height: 18px;
}

.tray {
    display: flex;
    align-items: center;
    gap: 8px;
    width: 150px;
    height: 38px;
    margin-left: 4px;
    padding: 0 2px 0 4px;
    border: 1px solid;
    border-color: #888 #fff #fff #888;
}

.tray time {
    display: flex;
    flex-direction: column;
    align-items: center;
    flex: 1;
    font: 10px/16px "DejaVu Sans Mono", monospace;
}

.watermark {
    position: fixed;
    right: 19px;
    bottom: 8px;
    width: 264px;
    height: 90px;
    pointer-events: none;
}

.wm-big {
    fill: #fff;
    fill-opacity: 0.5;
    font: bold 38px "Liberation Sans", "Noto Sans CJK SC", sans-serif;
}

.wm-small {
    fill: #fff;
    fill-opacity: 0.5;
    font: 18px "Liberation Sans", sans-serif;
}
```
